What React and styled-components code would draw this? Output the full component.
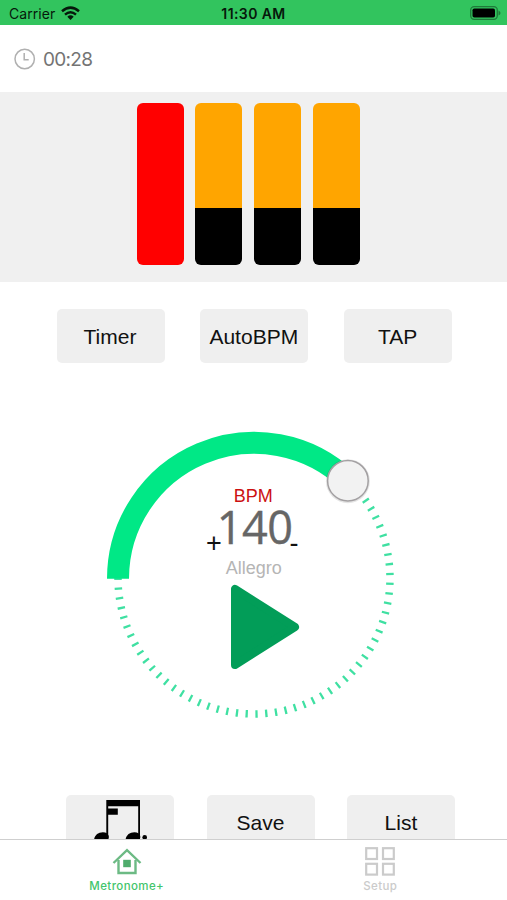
import styled, { createGlobalStyle } from "styled-components";
import { useState } from "react";

const TEMPO_R = 136;

const App = () => {
  const [bpm, setBpm] = useState(140);
  const [tab, setTab] = useState("metronome");
  const [beats, setBeats] = useState([
    { id: 1, level: 100, accent: true },
    { id: 2, level: 65 },
    { id: 3, level: 65 },
    { id: 4, level: 65 },
  ]);

  const toggleAccent = (id) => {
    setBeats(
      beats.map((beat) =>
        beat.id === id
          ? { ...beat, accent: !beat.accent, level: beat.accent ? 65 : 100 }
          : beat
      )
    );
  };

  return (
    <Screen>
      <GlobalStyle />
      <StatusBar>
        <Carrier>
          <CarrierName>Carrier</CarrierName>
          <WifiIcon />
        </Carrier>
        <Time>11:30 AM</Time>
        <BatteryIcon />
      </StatusBar>
      <Elapsed>
        <ClockIcon />
        <span>00:28</span>
      </Elapsed>
      <Beats>
        {beats.map((beat) => (
          <Beat
            key={beat.id}
            $accent={beat.accent}
            $level={beat.level}
            onClick={() => toggleAccent(beat.id)}
          />
        ))}
      </Beats>
      <Actions>
        <Button>Timer</Button>
        <Button>AutoBPM</Button>
        <Button>TAP</Button>
      </Actions>
      <Dial>
        <TempoRing />
        <Readout>
          <BpmLabel>BPM</BpmLabel>
          <TempoRow>
            <Step onClick={() => setBpm(bpm + 1)}>+</Step>
            <Tempo>{bpm}</Tempo>
            <Step onClick={() => setBpm(bpm - 1)}>-</Step>
          </TempoRow>
          <TempoName>Allegro</TempoName>
          <PlayButton>
            <PlayIcon />
          </PlayButton>
        </Readout>
      </Dial>
      <BottomActions>
        <Button>
          <NotesIcon />
        </Button>
        <Button>Save</Button>
        <Button>List</Button>
      </BottomActions>
      <TabBar>
        <Tab $active={tab === "metronome"} onClick={() => setTab("metronome")}>
          <HomeIcon />
          <TabName>Metronome+</TabName>
        </Tab>
        <Tab $active={tab === "setup"} onClick={() => setTab("setup")}>
          <GridIcon />
          <TabName>Setup</TabName>
        </Tab>
      </TabBar>
    </Screen>
  );
};

const WifiIcon = () => (
  <svg width="19" height="15" viewBox="0 0 19 15">
    <g fill="none" stroke="#06180b" strokeWidth="2.5">
      <path d="M1 5.2Q9.5 -2 18 5.2" />
      <path d="M4 8.6Q9.5 3.9 15 8.6" />
    </g>
    <path d="M6.3 10.7Q9.5 8 12.7 10.7L9.5 14Z" fill="#06180b" />
  </svg>
);

const BatteryIcon = () => (
  <svg width="31" height="14" viewBox="0 0 31 14">
    <rect
      x="0.7"
      y="0.7"
      width="26.6"
      height="12.6"
      rx="3.5"
      fill="none"
      stroke="#1f7a3a"
      strokeWidth="1.3"
    />
    <rect x="2.5" y="2.5" width="22.5" height="9" rx="1.8" fill="#000" />
    <path d="M28.5 4.5Q30.5 5.5 30.5 7T28.5 9.5Z" fill="#1f7a3a" />
  </svg>
);

const ClockIcon = () => (
  <svg width="22" height="22" viewBox="0 0 22 22">
    <g fill="none" stroke="#b0b0b0" strokeWidth="1.5">
      <circle cx="10.7" cy="11" r="9.7" />
      <path d="M10.2 5V11.8H14.7" />
    </g>
  </svg>
);

const TempoRing = () => (
  <svg width="300" height="300" viewBox="0 0 300 300">
    <g fill="none">
      <path
        d={`M14 150A${TEMPO_R} ${TEMPO_R} 0 1 0 244.6 52.3`}
        stroke="#3fe0a2"
        strokeWidth="7.5"
        strokeDasharray="2.3 7.477"
        strokeDashoffset="0.3"
      />
      <path
        d={`M14 150.8A${TEMPO_R} ${TEMPO_R} 0 0 1 244.6 53.1`}
        stroke="#00e886"
        strokeWidth="22"
      />
    </g>
    <circle cx="243.9" cy="53.2" r="22" fill="#000" opacity="0.1" />
    <circle
      cx="243.9"
      cy="52.7"
      r="20.3"
      fill="#f2f2f2"
      stroke="#a3a0a2"
      strokeWidth="1.5"
    />
  </svg>
);

const PlayIcon = () => (
  <svg width="70" height="86" viewBox="0 0 70 86">
    <path
      d="M5 5V81L65 43Z"
      fill="#029d58"
      stroke="#029d58"
      strokeWidth="8"
      strokeLinejoin="round"
    />
  </svg>
);

const NotesIcon = () => (
  <svg width="54" height="46" viewBox="0 0 54 46">
    <path
      d="M12.3 0H46V40H44.2V6.3H14.2V8.5H23.8V14.7H14.2V40H12.3Z"
      fill="#000"
    />
    <ellipse cx="7.5" cy="38" rx="7.5" ry="5.5" transform="rotate(-20 7.5 38)" />
    <ellipse cx="39" cy="38" rx="7.5" ry="5.5" transform="rotate(-20 39 38)" />
    <circle cx="50.7" cy="37.3" r="2.3" />
  </svg>
);

const HomeIcon = () => (
  <svg width="30" height="28" viewBox="0 0 30 28">
    <g fill="none" stroke="#6cba84" strokeWidth="2.4">
      <path d="M1.5 16L15 3.2L28.5 16" />
      <path d="M6.5 13V26H23.5V13" />
    </g>
    <rect x="11.2" y="12.8" width="7.6" height="7.4" fill="#4fac6c" />
  </svg>
);

const GridIcon = () => (
  <svg width="30" height="30" viewBox="0 0 30 30">
    <g fill="none" stroke="#cbcbcb" strokeWidth="2.2">
      <rect x="1.2" y="1.2" width="10.8" height="10.8" />
      <rect x="18" y="1.2" width="10.8" height="10.8" />
      <rect x="1.2" y="16.8" width="10.8" height="10.8" />
      <rect x="18" y="16.8" width="10.8" height="10.8" />
    </g>
  </svg>
);

const GlobalStyle = createGlobalStyle`
  body {
    margin: 0;
    background: #fff;
  }

  * {
    box-sizing: border-box;
  }

  svg {
    display: block;
    flex: none;
  }
`;

const Screen = styled.div`
  width: 507px;
  height: 900px;
  overflow: hidden;
  display: flex;
  flex-direction: column;
  background: #fff;
  font-family: "Liberation Sans", Arial, sans-serif;
`;

const StatusBar = styled.div`
  flex: none;
  height: 25px;
  padding: 1px 6px 0 9px;
  display: grid;
  grid-template-columns: 1fr auto 1fr;
  align-items: center;
  background: #32c45e;
  color: #06180b;
  font-family: Inter, sans-serif;
  font-size: 14px;

  > svg {
    justify-self: end;
  }
`;

const Carrier = styled.div`
  display: flex;
  align-items: center;
  gap: 6px;
`;

const CarrierName = styled.span`
  letter-spacing: 0.05px;
`;

const Time = styled.div`
  padding-right: 3px;
  font-weight: 600;
  letter-spacing: 0.4px;
`;

const Elapsed = styled.div`
  flex: none;
  height: 67px;
  padding: 1px 0 0 14px;
  display: flex;
  align-items: center;
  gap: 7px;
  color: #747474;
  font-family: Inter, sans-serif;
  font-size: 19px;
  letter-spacing: -0.7px;
`;

const Beats = styled.div`
  flex: none;
  height: 189.5px;
  padding: 11.3px 0 0 136.6px;
  display: flex;
  gap: 11.7px;
  background: #f0f0f0;
`;

const Beat = styled.div`
  width: 47px;
  height: 161.6px;
  border-radius: 6px;
  background: ${(props) =>
    props.$accent
      ? "#ff0000"
      : `linear-gradient(#ffa500 ${props.$level}%, #000 ${props.$level}%)`};
`;

const Actions = styled.div`
  flex: none;
  padding: 27px 0 0 56.5px;
  display: flex;
  gap: 35.8px;
`;

const Button = styled.button`
  width: 108px;
  height: 54px;
  padding: 2px 1px 0 0;
  border: none;
  border-radius: 5px;
  display: flex;
  align-items: center;
  justify-content: center;
  background: #efefef;
  color: #111;
  font-family: inherit;
  font-size: 21px;
`;

const Dial = styled.div`
  flex: none;
  width: 300px;
  height: 300px;
  margin: 65.5px 0 0 103.8px;
  position: relative;
`;

const Readout = styled.div`
  position: absolute;
  inset: 0;
  padding-top: 58px;
  display: flex;
  flex-direction: column;
  align-items: center;
`;

const BpmLabel = styled.div`
  margin-right: 1px;
  color: #cc1111;
  font-size: 18px;
  line-height: 20px;
`;

const TempoRow = styled.div`
  height: 42px;
  margin-right: 3px;
  display: flex;
  align-items: baseline;
  justify-content: center;
  line-height: 42px;
`;

const Tempo = styled.div`
  margin: 0 -3px 0 -5px;
  color: #666;
  font-family: "Open Sans", "Noto Sans", sans-serif;
  font-size: 45px;
  letter-spacing: -0.5px;
  -webkit-text-stroke: 0.4px #666;
`;

const Step = styled.button`
  padding: 0;
  border: none;
  background: none;
  color: #111;
  font-family: inherit;
  font-size: 27px;
  line-height: 30px;
  position: relative;
  top: 8px;
`;

const TempoName = styled.div`
  margin-top: 9.5px;
  color: #b5b5b5;
  font-size: 18px;
  line-height: 20px;
`;

const PlayButton = styled.button`
  margin: 6px 0 0 22.5px;
  padding: 0;
  border: none;
  background: none;
`;

const BottomActions = styled.div`
  flex: none;
  height: 110.5px;
  padding: 66.5px 0 0 66.4px;
  display: flex;
  gap: 32.5px;
  overflow: hidden;

  svg {
    margin-left: 3px;
  }
`;

const TabBar = styled.div`
  flex: none;
  height: 62px;
  border-top: 1px solid #cfcfcf;
  display: grid;
  grid-template-columns: 1fr 1fr;
  background: #fff;
`;

const Tab = styled.div`
  padding-top: 7.5px;
  display: flex;
  flex-direction: column;
  align-items: center;
  color: ${(props) => (props.$active ? "#43c56c" : "#cbcbcb")};
`;

const TabName = styled.div`
  margin-top: auto;
  margin-bottom: 8px;
  font-family: Inter, sans-serif;
  font-size: 11.5px;
  font-weight: 500;
  line-height: 14px;
  letter-spacing: 0.4px;
`;

export default App;
